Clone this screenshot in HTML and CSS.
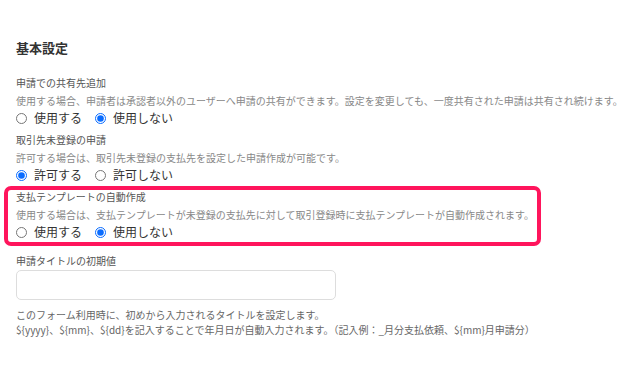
FILE: index.html
```html
<!DOCTYPE html>
<html lang="ja">
<head>
<meta charset="utf-8">
<title>基本設定</title>
<link rel="stylesheet" href="styles.css">
</head>
<body>
<div class="page">
  <h2 class="title">基本設定</h2>

  <div class="group">
    <div class="label">申請での共有先追加</div>
    <div class="desc">使用する場合、申請者は承認者以外のユーザーへ申請の共有ができます。設定を変更しても、一度共有された申請は共有され続けます。</div>
    <div class="radios">
      <label class="opt"><input type="radio" name="share"><span>使用する</span></label>
      <label class="opt"><input type="radio" name="share" checked><span>使用しない</span></label>
    </div>
  </div>

  <div class="group">
    <div class="label">取引先未登録の申請</div>
    <div class="desc">許可する場合は、取引先未登録の支払先を設定した申請作成が可能です。</div>
    <div class="radios">
      <label class="opt"><input type="radio" name="unreg" checked><span>許可する</span></label>
      <label class="opt"><input type="radio" name="unreg"><span>許可しない</span></label>
    </div>
  </div>

  <div class="highlight">
    <div class="group">
      <div class="label">支払テンプレートの自動作成</div>
      <div class="desc">使用する場合は、支払テンプレートが未登録の支払先に対して取引登録時に支払テンプレートが自動作成されます。</div>
      <div class="radios">
        <label class="opt"><input type="radio" name="tpl"><span>使用する</span></label>
        <label class="opt"><input type="radio" name="tpl" checked><span>使用しない</span></label>
      </div>
    </div>
  </div>

  <div class="field">
    <div class="label">申請タイトルの初期値</div>
    <input class="text-input" type="text">
    <div class="help">このフォーム利用時に、初めから入力されるタイトルを設定します。</div>
    <div class="help">${yyyy}、${mm}、${dd}を記入することで年月日が自動入力されます。（記入例：_月分支払依頼、${mm}月申請分）</div>
  </div>
</div>
</body>
</html>
```
FILE: styles.css
```css
html, body {
  margin: 0;
  padding: 0;
  background: #ffffff;
}

body {
  font-family: "Noto Sans CJK JP", "Noto Sans", "Liberation Sans", sans-serif;
  color: #333333;
}

.page {
  padding: 39px 16px 0 16px;
}

.title {
  margin: 0 0 19px 0;
  font-size: 13px;
  line-height: 18px;
  font-weight: 700;
  color: #333333;
}

.group {
  margin-bottom: 6px;
}

.label {
  font-size: 10px;
  line-height: 14px;
  color: #555555;
  margin-bottom: 4px;
}

.desc {
  font-size: 10px;
  line-height: 14px;
  color: #888888;
  white-space: nowrap;
}

.radios {
  display: flex;
  align-items: center;
  gap: 13px;
  height: 18px;
  margin-top: 1px;
}

.opt {
  display: flex;
  align-items: center;
  gap: 7px;
  font-size: 12px;
  line-height: 18px;
  color: #333333;
}

.opt input {
  margin: 0;
  width: 11px;
  height: 11px;
  accent-color: #0a6cff;
}

.highlight {
  margin-left: -12px;
  width: 537px;
  box-sizing: border-box;
  border: 4px solid #ff155c;
  border-radius: 7px;
  padding: 0 7px 0 8px;
  margin-top: -4px;
  margin-bottom: 8px;
}

.highlight .group {
  margin-bottom: 1px;
}

.field .label {
  margin-bottom: 2px;
}

.text-input {
  display: block;
  width: 320px;
  height: 30px;
  box-sizing: border-box;
  border: 1px solid #dddddd;
  border-radius: 5px;
  background: #ffffff;
  margin: 0 0 7px 0;
  padding: 0 8px;
  font-family: inherit;
}

.help {
  font-size: 10px;
  line-height: 15px;
  color: #666666;
  white-space: nowrap;
}
```
